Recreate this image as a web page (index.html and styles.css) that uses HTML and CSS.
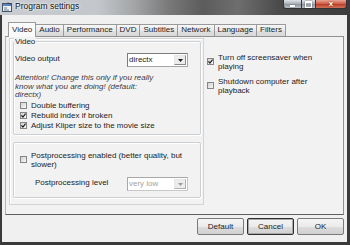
FILE: index.html
```html
<!DOCTYPE html>
<html lang="en">
<head>
  <meta charset="UTF-8">
  <title>Program settings</title>
  <link rel="stylesheet" href="styles.css">
</head>
<body>
  <div class="window">
    <div class="titlebar">
      <svg class="app-icon" width="10" height="10" viewBox="0 0 10 10">
        <rect x="0.5" y="1.5" width="9" height="8" fill="#eef3f8" stroke="#44536a"/>
        <rect x="1" y="2" width="8" height="2" fill="#5b86c0"/>
        <path d="M2 6h3M2 8h5" stroke="#6c7a8c" stroke-width="1"/>
        <path d="M6 0.5l2 2" stroke="#2d2d2d" stroke-width="1"/>
      </svg>
      <span class="title">Program settings</span>
      <div class="controls">
        <span class="ctl min"></span>
        <span class="ctl max"></span>
        <span class="ctl close">x</span>
      </div>
    </div>

    <div class="client">
      <div class="tabs">
        <span class="tab active">Video</span>
        <span class="tab">Audio</span>
        <span class="tab">Performance</span>
        <span class="tab">DVD</span>
        <span class="tab">Subtitles</span>
        <span class="tab">Network</span>
        <span class="tab">Language</span>
        <span class="tab">Filters</span>
      </div>

      <div class="panel">
        <div class="left-col">
          <div class="group video">
            <div class="legend">Video</div>
            <div class="row">
              <span class="label">Video output</span>
              <div class="combo">
                <span class="value">directx</span>
                <span class="arrow"><svg width="5" height="3" viewBox="0 0 5 3"><path d="M0 0h5L2.5 3z" fill="#1a1a1a"/></svg></span>
              </div>
            </div>
            <div class="note">Attention! Change this only if you really<br>know what you are doing! (default:<br>directx)</div>
            <div class="check"><span class="box"></span>Double buffering</div>
            <div class="check"><span class="box"><svg width="5" height="5" viewBox="0 0 5 5"><path d="M0.4 2.4L1.9 4L4.6 0.6" stroke="#1a1a1a" stroke-width="1.2" fill="none"/></svg></span>Rebuild index if broken</div>
            <div class="check"><span class="box"><svg width="5" height="5" viewBox="0 0 5 5"><path d="M0.4 2.4L1.9 4L4.6 0.6" stroke="#1a1a1a" stroke-width="1.2" fill="none"/></svg></span>Adjust Kliper size to the movie size</div>
          </div>

          <div class="group pp">
            <div class="check two-line"><span class="box"></span><span>Postprocessing enabled (better quality, but<br>slower)</span></div>
            <div class="row level">
              <span class="label">Postprocessing level</span>
              <div class="combo disabled">
                <span class="value">very low</span>
                <span class="arrow"><svg width="5" height="3" viewBox="0 0 5 3"><path d="M0 0h5L2.5 3z" fill="#9a9a9a"/></svg></span>
              </div>
            </div>
          </div>
        </div>

        <div class="right-col">
          <div class="check two-line"><span class="box"><svg width="5" height="5" viewBox="0 0 5 5"><path d="M0.4 2.4L1.9 4L4.6 0.6" stroke="#1a1a1a" stroke-width="1.2" fill="none"/></svg></span><span>Turn off screensaver when<br>playing</span></div>
          <div class="check two-line"><span class="box"></span><span>Shutdown computer after<br>playback</span></div>
        </div>
      </div>

      <div class="buttons">
        <span class="btn">Default</span>
        <span class="btn focused">Cancel</span>
        <span class="btn">OK</span>
      </div>
    </div>
  </div>
</body>
</html>
```

FILE: styles.css
```css
* { box-sizing: border-box; }
body {
  margin: 0;
  width: 350px;
  height: 245px;
  overflow: hidden;
  background: #3a3a3a;
  font-family: "Liberation Sans", Arial, sans-serif;
  font-size: 8px;
  color: #1c1c24;
}
.window {
  width: 350px;
  height: 245px;
  display: flex;
  flex-direction: column;
}

/* title bar */
.titlebar {
  height: 15px;
  display: flex;
  align-items: flex-start;
  background: linear-gradient(90deg, #c9cdd2 0%, #c3c7cb 28%, #a4a6a8 38%, #7a7a7a 48%, #5c5c5c 58%, #6e6e6e 68%, #4a4a4a 80%, #3c3c3c 100%);
}
.app-icon { margin: 2px 0 0 2px; }
.title {
  margin: 1px 0 0 3px;
  font-size: 8.5px;
  line-height: 11px;
  color: #111;
  text-shadow: 0 0 3px #fff, 0 0 2px #fff;
}
.controls {
  margin-left: auto;
  margin-right: 3px;
  display: flex;
}
.ctl {
  height: 9px;
  border: 1px solid #333;
  border-top: none;
  display: flex;
  align-items: center;
  justify-content: center;
}
.min {
  width: 19px;
  border-radius: 0 0 0 3px;
  background: linear-gradient(#dfe3e7, #a7adb4 50%, #8e959c 51%, #b8bec4);
}
.max {
  width: 14px;
  border-left: none;
  background: linear-gradient(#dfe3e7, #a7adb4 50%, #8e959c 51%, #b8bec4);
}
.min::after {
  content: "";
  width: 5px;
  height: 2px;
  margin-top: 3px;
  background: #fff;
  box-shadow: 0 0 1px #333;
}
.max::after {
  content: "";
  width: 5px;
  height: 4px;
  border: 1px solid #fff;
  border-top-width: 2px;
  box-shadow: 0 0 1px #333;
}
.close {
  width: 31px;
  border-left: none;
  border-radius: 0 0 3px 0;
  background: linear-gradient(#e8a593, #cc5a45 50%, #b93a26 51%, #d0735c);
  color: #fff;
  font-weight: bold;
  font-size: 8px;
  line-height: 8px;
  text-shadow: 0 0 2px #5a1a10;
}

/* client */
.client {
  flex: 1;
  margin: 0 3px 3px 2px;
  background: #f0f0f0;
  padding: 7px 3px 0 3px;
  display: flex;
  flex-direction: column;
}
.tabs {
  display: flex;
  align-items: flex-end;
  height: 14px;
  padding-left: 4px;
}
.tab {
  height: 12px;
  padding: 0 3px;
  line-height: 9px;
  border: 1px solid #9a9a9a;
  border-bottom: none;
  margin-left: -1px;
  background: linear-gradient(#f6f6f6, #e9e9e9 50%, #e0e0e0 51%, #d8d8d8);
  color: #1c1c24;
}
.tab.active {
  height: 15px;
  padding-top: 2px;
  margin-bottom: -1px;
  background: #fafafa;
  position: relative;
  z-index: 1;
}
.panel {
  height: 179px;
  border: 1px solid #8f9092;
  border-left-color: #b4b4b4;
  border-bottom-color: #5e5e5e;
  background: #f2f2f2;
  display: flex;
  align-items: flex-start;
  padding: 1px 0 0 3px;
}
.left-col {
  width: 195px;
  height: 167px;
  border: 1px solid #d4d4d4;
  box-shadow: inset 1px 1px 0 #fff;
  padding: 2px 0 0 3px;
}
.group {
  width: 188px;
  border: 1px solid #cbd0d5;
  border-radius: 2px;
  box-shadow: inset 1px 1px 0 #fff, 1px 1px 0 #fff;
}
.group.video { height: 94px; }
.group.pp {
  height: 56px;
  margin-top: 7px;
  padding-top: 7.5px;
}
.legend {
  display: table;
  margin: -5px 0 0 0;
  padding: 0 1px;
  line-height: 9px;
  background: #f2f2f2;
}
.row {
  display: flex;
  align-items: flex-start;
  height: 14px;
  margin-top: 7px;
}
.row .label {
  padding-left: 1px;
  line-height: 12px;
}
.row.level { margin-top: 8.5px; }
.row.level .label { padding-left: 21px; }
.combo {
  margin-left: auto;
  margin-right: 12px;
  width: 61px;
  height: 14px;
  display: flex;
  border: 1px solid #7b7b7b;
  border-right-color: #a5a5a5;
  border-bottom-color: #a5a5a5;
  background: #fff;
}
.combo .value {
  flex: 1;
  padding-left: 1px;
  line-height: 12px;
}
.combo .arrow {
  width: 12px;
  margin: 1px;
  border: 1px solid #8a8a8a;
  border-left-color: #e6e6e6;
  border-top-color: #e6e6e6;
  background: #ececec;
  display: flex;
  align-items: center;
  justify-content: center;
}
.combo.disabled {
  border-color: #a8a8a8;
  border-right-color: #c8c8c8;
  border-bottom-color: #c8c8c8;
}
.combo.disabled .value { color: #a3a3a3; }
.combo.disabled .arrow { border-right-color: #b0b0b0; border-bottom-color: #b0b0b0; }
.note {
  margin-top: 7px;
  padding-left: 1px;
  line-height: 8.5px;
  font-style: italic;
  color: #3a3a46;
}
.check {
  display: flex;
  align-items: center;
  height: 10px;
  line-height: 10px;
  padding-left: 6px;
}
.note + .check { margin-top: 1px; }
.check.two-line {
  height: 18px;
  line-height: 9px;
}
.box {
  width: 7px;
  height: 7px;
  flex: none;
  margin-right: 4px;
  border: 1px solid #868686;
  background: linear-gradient(135deg, #d2d2d2, #f8f8f8);
  display: flex;
  align-items: center;
  justify-content: center;
}
.right-col {
  margin-left: 3px;
  padding-top: 14.5px;
}
.right-col .check { padding-left: 0; }
.right-col .check + .check { margin-top: 6px; }

/* dialog buttons */
.buttons {
  display: flex;
  justify-content: flex-end;
  gap: 3px;
  margin-top: 3px;
}
.btn {
  width: 47px;
  height: 17px;
  border: 1px solid #7a7a7a;
  border-radius: 2px;
  background: linear-gradient(#f4f4f4, #ebebeb 50%, #dddddd 51%, #d0d0d0);
  text-align: center;
  line-height: 15px;
}
.btn.focused {
  border-color: #2e2e2e;
  box-shadow: inset 0 0 0 1px #a9a9a9;
}
```
